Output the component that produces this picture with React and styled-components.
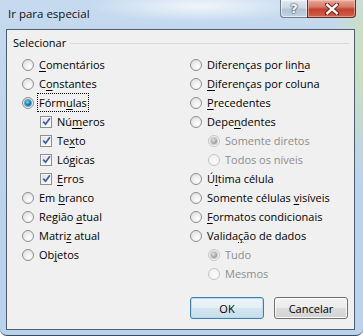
import React from 'react';
import styled, { createGlobalStyle } from 'styled-components';

const GlobalStyle = createGlobalStyle`
  html, body {
    margin: 0;
    padding: 0;
    background: #ffffff;
  }
  body {
    font-family: "Open Sans", "Noto Sans", sans-serif;
    font-size: 11px;
    color: #000;
  }
`;

const Window = styled.div`
  width: 363px;
  height: 336px;
  box-sizing: border-box;
  display: flex;
  flex-direction: column;
  border-bottom: 1px solid #3d4b59;
  border-radius: 0 0 7px 7px;
  overflow: hidden;
  background:
    radial-gradient(ellipse 110px 16px at 200px 6px, rgba(242, 247, 252, 0.95), rgba(242, 247, 252, 0)),
    radial-gradient(ellipse 40px 120px at 370px 60px, rgba(205, 228, 170, 0.9), rgba(205, 228, 170, 0)),
    linear-gradient(180deg, #c6daef 0%, #bcd4ec 40%, #b9d3ee 100%);
`;

const TitleBar = styled.div`
  height: 29px;
  flex: none;
  display: flex;
  align-items: flex-start;
  padding-left: 8px;
`;

const Title = styled.div`
  font-size: 11.5px;
  line-height: 16px;
  margin-top: 6px;
  color: #111;
`;

const Caption = styled.div`
  display: flex;
  margin-left: auto;
  margin-right: 7px;
`;

const HelpButton = styled.div`
  width: 27px;
  height: 18px;
  box-sizing: border-box;
  border: 1px solid #6f7f91;
  border-top: none;
  border-right: none;
  border-radius: 0 0 0 4px;
  background: linear-gradient(180deg, #e3eaf2 0%, #cdd8e4 45%, #b3c3d5 55%, #c3d2e1 100%);
  box-shadow: inset 0 0 0 1px rgba(255, 255, 255, 0.55);
  display: flex;
  align-items: center;
  justify-content: center;
  font-family: "DejaVu Sans", sans-serif;
  font-weight: bold;
  font-size: 13px;
  color: #fff;
  text-shadow: 0 0 1px #3b4756, 0 0 1px #3b4756, 0 0 2px #3b4756;
`;

const CloseButton = styled.div`
  width: 49px;
  height: 18px;
  box-sizing: border-box;
  border: 1px solid #6b2a22;
  border-top: none;
  border-radius: 0 0 4px 0;
  background: linear-gradient(180deg, #e9a99b 0%, #d67a68 40%, #c2412f 55%, #d2604b 100%);
  box-shadow: inset 0 0 0 1px rgba(255, 220, 210, 0.45);
  display: flex;
  align-items: center;
  justify-content: center;
`;

const Client = styled.div`
  flex: 1;
  margin: 0 8px 5px 6px;
  border: 1px solid #4f5e6d;
  background: #f0f0f0;
  display: flex;
  flex-direction: column;
  padding: 5px 5px 10px 6px;
`;

const SectionHeader = styled.div`
  display: flex;
  align-items: center;
  gap: 4px;
  line-height: 16px;
`;

const Rule = styled.div`
  flex: 1;
  height: 1px;
  background: #d5dade;
  margin-top: 1px;
`;

const Options = styled.div`
  display: grid;
  grid-template-columns: 168px 1fr;
  margin: 4px 0 0 9px;
`;

const Column = styled.div`
  display: flex;
  flex-direction: column;
`;

const Option = styled.div`
  display: flex;
  align-items: center;
  gap: 5px;
  height: 19px;
  padding-left: ${(p) => (p.$indent ? 18 : 0)}px;
  color: ${(p) => (p.$disabled ? '#8d8d8d' : '#000')};
  white-space: nowrap;
`;

const Radio = styled.span`
  width: 12px;
  height: 12px;
  flex: none;
  box-sizing: border-box;
  border-radius: 50%;
  border: 1px solid ${(p) => (p.$disabled ? '#c4c4c4' : '#8c8f92')};
  background: ${(p) =>
    p.$disabled
      ? 'radial-gradient(circle at 65% 70%, #fbfbfb 0%, #eeeeee 100%)'
      : 'radial-gradient(circle at 65% 70%, #ffffff 0%, #e9e9e9 60%, #d4d4d4 100%)'};
  display: flex;
  align-items: center;
  justify-content: center;
  &::after {
    content: '';
    display: ${(p) => (p.$checked ? 'block' : 'none')};
    width: 6px;
    height: 6px;
    border-radius: 50%;
    background: ${(p) =>
      p.$disabled
        ? 'radial-gradient(circle at 40% 35%, #e2e2e2 0%, #a3a3a3 60%, #8c8c8c 100%)'
        : 'radial-gradient(circle at 40% 35%, #8fdcf4 0%, #1f80b4 45%, #0b3f68 100%)'};
    box-shadow: 0 0 0 1px ${(p) => (p.$disabled ? '#c8c8c8' : '#5aa8cf')};
  }
`;

const Check = styled.span`
  width: 12px;
  height: 12px;
  flex: none;
  box-sizing: border-box;
  border: 1px solid #8e8f91;
  background: linear-gradient(135deg, #dcdcdc 0%, #f4f4f4 60%, #ffffff 100%);
  box-shadow: inset 0 0 0 1px #f7f7f7;
  display: flex;
  align-items: center;
  justify-content: center;
`;

const Label = styled.span`
  line-height: 15px;
`;

const FocusLabel = styled.span`
  line-height: 15px;
  outline: 1px dotted #000;
  outline-offset: 1px;
`;

const Key = styled.u`
  text-decoration-thickness: 1px;
  text-underline-offset: 2px;
`;

const Footer = styled.div`
  margin-top: auto;
  display: flex;
  justify-content: flex-end;
  gap: 10px;
  padding-right: 1px;
`;

const Button = styled.div`
  width: 74px;
  height: 22px;
  box-sizing: border-box;
  border-radius: 3px;
  border: 1px solid ${(p) => (p.$default ? '#3d7fae' : '#707070')};
  background: ${(p) =>
    p.$default
      ? 'linear-gradient(180deg, #eef5fa 0%, #e3eef6 50%, #d4e5f0 51%, #c9ddea 100%)'
      : 'linear-gradient(180deg, #f3f3f3 0%, #ebebeb 50%, #dddddd 51%, #d2d2d2 100%)'};
  box-shadow: inset 0 0 0 1px ${(p) => (p.$default ? '#b8dcef' : '#fbfbfb')};
  display: flex;
  align-items: center;
  justify-content: center;
  line-height: 15px;
`;

const CheckMark = () => (
  <svg width="9" height="9" viewBox="0 0 9 9">
    <path d="M1.2 4.6 L3.6 7.2 L7.9 1.2" fill="none" stroke="#3d5ea8" strokeWidth="1.7" />
  </svg>
);

const CloseGlyph = () => (
  <svg width="16" height="12" viewBox="0 0 16 12">
    <path d="M3 1.5 L13 10.5 M13 1.5 L3 10.5" stroke="#5a1f18" strokeWidth="4.2" strokeLinecap="round" />
    <path d="M3.3 1.8 L12.7 10.2 M12.7 1.8 L3.3 10.2" stroke="#ffffff" strokeWidth="2.4" strokeLinecap="square" />
  </svg>
);

const text = (label, key, Wrap = Label) => {
  if (!key) return <Wrap>{label}</Wrap>;
  const i = label.indexOf(key);
  return (
    <Wrap>
      {label.slice(0, i)}
      <Key>{key}</Key>
      {label.slice(i + key.length)}
    </Wrap>
  );
};

const leftItems = [
  { type: 'radio', label: 'Comentários', key: 'C' },
  { type: 'radio', label: 'Constantes', key: 'o' },
  { type: 'radio', label: 'Fórmulas', key: 'u', checked: true, focus: true },
  { type: 'check', label: 'Números', key: 'm', indent: true },
  { type: 'check', label: 'Texto', key: 'x', indent: true },
  { type: 'check', label: 'Lógicas', key: 'g', indent: true },
  { type: 'check', label: 'Erros', key: 'E', indent: true },
  { type: 'radio', label: 'Em branco', key: 'b' },
  { type: 'radio', label: 'Região atual', key: 'a' },
  { type: 'radio', label: 'Matriz atual', key: 'z' },
  { type: 'radio', label: 'Objetos', key: 'j' },
];

const rightItems = [
  { type: 'radio', label: 'Diferenças por linha', key: 'h' },
  { type: 'radio', label: 'Diferenças por coluna', key: 'D' },
  { type: 'radio', label: 'Precedentes', key: 'P' },
  { type: 'radio', label: 'Dependentes', key: 'n' },
  { type: 'radio', label: 'Somente diretos', indent: true, disabled: true, checked: true },
  { type: 'radio', label: 'Todos os níveis', indent: true, disabled: true },
  { type: 'radio', label: 'Última célula', key: 'l' },
  { type: 'radio', label: 'Somente células visíveis', key: 'v' },
  { type: 'radio', label: 'Formatos condicionais', key: 'F' },
  { type: 'radio', label: 'Validação de dados', key: 'ç' },
  { type: 'radio', label: 'Tudo', indent: true, disabled: true, checked: true },
  { type: 'radio', label: 'Mesmos', indent: true, disabled: true },
];

const Item = ({ item }) => (
  <Option $indent={item.indent} $disabled={item.disabled}>
    {item.type === 'radio' ? (
      <Radio $checked={item.checked} $disabled={item.disabled} />
    ) : (
      <Check>
        <CheckMark />
      </Check>
    )}
    {text(item.label, item.key, item.focus ? FocusLabel : Label)}
  </Option>
);

export default function App() {
  return (
    <>
      <GlobalStyle />
      <Window>
        <TitleBar>
          <Title>Ir para especial</Title>
          <Caption>
            <HelpButton>?</HelpButton>
            <CloseButton>
              <CloseGlyph />
            </CloseButton>
          </Caption>
        </TitleBar>
        <Client>
          <SectionHeader>
            <span>Selecionar</span>
            <Rule />
          </SectionHeader>
          <Options>
            <Column>
              {leftItems.map((item) => (
                <Item key={item.label} item={item} />
              ))}
            </Column>
            <Column>
              {rightItems.map((item) => (
                <Item key={item.label} item={item} />
              ))}
            </Column>
          </Options>
          <Footer>
            <Button $default>OK</Button>
            <Button>Cancelar</Button>
          </Footer>
        </Client>
      </Window>
    </>
  );
}
